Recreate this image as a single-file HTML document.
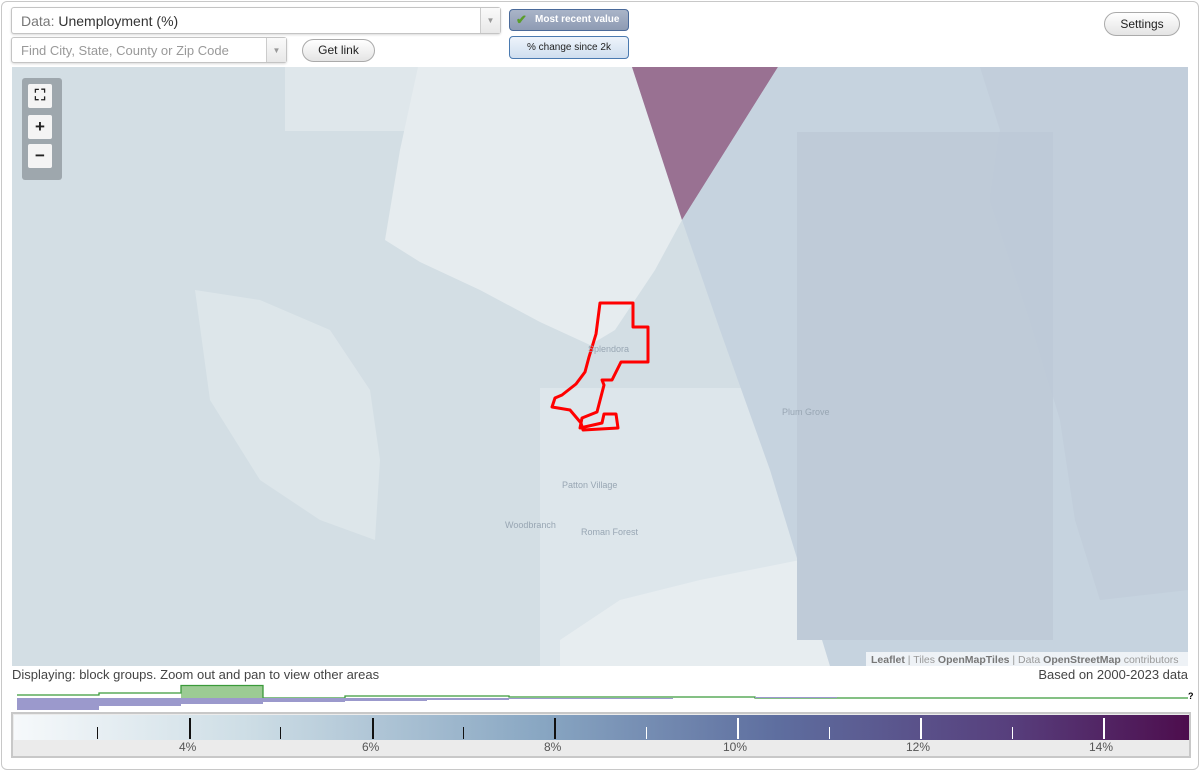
<!DOCTYPE html>
<html><head><meta charset="utf-8"><style>
*{box-sizing:border-box}
body{margin:0;width:1200px;height:771px;background:#fff;font-family:"Liberation Sans",Arial,sans-serif;position:relative;overflow:hidden}
.frame{position:absolute;left:1px;top:1px;width:1198px;height:769px;border:1px solid #c8c8c8;border-radius:6px}
.sel{position:absolute;background:#fff;border:1px solid #c4c4c4;border-radius:3px;box-shadow:0 1px 2px rgba(0,0,0,.15)}
.arrow{position:absolute;right:0;top:0;bottom:0;width:20px;border-left:1px solid #ccc;background:linear-gradient(#fafafa,#e8e8e8);color:#999;font-size:8px;text-align:center}
.btn{position:absolute;border:1px solid #aaa;border-radius:12px;background:linear-gradient(#fff,#e4e4e4);font-size:12px;text-align:center;color:#222}
.zb{position:absolute;left:6px;width:24px;height:24px;background:#f4f4f4;border-radius:2px;text-align:center;font-weight:bold;font-size:17px;line-height:23px;color:#222}
.lab{position:absolute;top:740px;font-size:12px;color:#555}
.tk{position:absolute;width:2px;background:#111}
</style></head><body>
<div class="frame"></div>
<div class="sel" style="left:11px;top:7px;width:490px;height:27px"><span style="position:absolute;left:9px;top:5px;font-size:14px;color:#777">Data: <span style="color:#333">Unemployment (%)</span></span><div class="arrow" style="line-height:26px">▼</div></div>
<div class="sel" style="left:11px;top:37px;width:276px;height:26px"><span style="position:absolute;left:9px;top:5px;font-size:13px;color:#999">Find City, State, County or Zip Code</span><div class="arrow" style="line-height:25px">▼</div></div>
<div class="btn" style="left:302px;top:39px;width:73px;height:23px;line-height:21px">Get link</div>
<div style="position:absolute;left:509px;top:9px;width:120px;height:22px;border:1px solid #4a6a9a;border-radius:4px;background:linear-gradient(#a9b4c8,#8e9bb3);color:#fff;font-size:10px;font-weight:bold;line-height:20px;padding-left:25px">Most recent value<span style="position:absolute;left:6px;top:0;color:#5a9d2a;font-size:13px">✔</span></div>
<div style="position:absolute;left:509px;top:36px;width:120px;height:23px;border:1px solid #4a7ab0;border-radius:4px;background:linear-gradient(#eef4fb,#cfdeef);color:#222;font-size:10px;line-height:21px;text-align:center">% change since 2k</div>
<div class="btn" style="left:1104px;top:12px;width:76px;height:24px;line-height:22px">Settings</div>

<svg style="position:absolute;left:0;top:0" width="1200" height="771" viewBox="0 0 1200 771">
<defs><clipPath id="c"><rect x="12" y="67" width="1176" height="599"/></clipPath>
<linearGradient id="g" x1="0" x2="1"><stop offset="0" stop-color="#f6f9fb"/><stop offset=".2" stop-color="#cddde5"/><stop offset=".45" stop-color="#88a6c2"/><stop offset=".65" stop-color="#5e6e9f"/><stop offset=".85" stop-color="#573e7c"/><stop offset="1" stop-color="#4d0d4d"/></linearGradient></defs>
<g clip-path="url(#c)">
<rect x="12" y="67" width="1176" height="599" fill="#d3dee4"/>
<rect x="285" y="67" width="255" height="64" fill="#dfe7eb"/>
<path d="M195 290 L260 300 L330 330 L370 390 L380 460 L375 540 L320 520 L260 480 L210 400 Z" fill="#dde6ea"/>
<rect x="540" y="388" width="260" height="278" fill="#dde6eb"/>
<path d="M560 640 L620 600 L700 580 L800 560 L830 666 L560 666 Z" fill="#e7edf0"/>
<path d="M418 67 L632 67 L682 220 L655 270 L615 330 L590 345 L540 322 L480 290 L420 262 L385 240 L400 150 Z" fill="#e6ecef"/>
<path d="M632 67 L778 67 L682 220 Z" fill="#997192"/>
<path d="M682 220 L778 67 L1188 67 L1188 666 L830 666 L770 470 L720 330 Z" fill="#c6d3df"/>
<rect x="797" y="132" width="256" height="508" fill="#bfcbd8"/>
<path d="M980 67 L1000 130 L990 200 L1030 320 L1060 420 L1075 520 L1100 600 L1188 590 L1188 67 Z" fill="#bdcad8" opacity=".5"/>
<path d="M600 303 L633 303 L633 327 L648 327 L648 362 L621 362 L612 380 L602 380 L604 385 L597 412 L582 418 L580 428 L602 423 L604 414 L616 414 L618 428 L583 430 L581 423 L570 410 L552 407 L555 398 L562 395 L576 384 L585 372 L589 357 L596 334 Z" fill="none" stroke="#ff0000" stroke-width="3" stroke-linejoin="round"/>
<g font-size="9" fill="#98a6b3"><text x="588" y="352">Splendora</text><text x="782" y="415">Plum Grove</text><text x="562" y="488">Patton Village</text><text x="505" y="528">Woodbranch</text><text x="581" y="535">Roman Forest</text></g>
<rect x="866" y="652" width="322" height="14" fill="#fff" opacity=".7"/>
<text x="871" y="663" font-size="10.5" fill="#999"><tspan fill="#777" font-weight="bold">Leaflet</tspan> | Tiles <tspan fill="#777" font-weight="bold">OpenMapTiles</tspan> | Data <tspan fill="#777" font-weight="bold">OpenStreetMap</tspan> contributors</text>
</g>
<rect x="181" y="686" width="82" height="12" fill="#9ccb94"/>
<path d="M17 695 H99 V693 H181 V685.5 H263 V698 H345 V696 H509 V697 H755 V698 H1188" fill="none" stroke="#3a9a3a" stroke-width="1.3"/>
<path d="M17 698 H263 V702 H345 V701 H427 V700 H509 V699 H591 V699 H673 V698 H755 V697 H837 V698 H17 Z" fill="#9b99cc"/>
<path d="M17 698 V710 H99 V706 H181 V704 H263 V698 Z" fill="#9b99cc"/>
<text x="1188" y="699" font-size="9" font-weight="bold">?</text>
<rect x="12" y="713" width="1178" height="44" fill="#ebebeb" stroke="#c8c8c8" stroke-width="2"/>
<rect x="14" y="715" width="1175" height="25" fill="url(#g)"/>
</svg>
<div style="position:absolute;left:22px;top:78px;width:40px;height:102px;background:#9ea7ad;border-radius:3px">
<div class="zb" style="top:6px;font-size:15px">⛶</div><div class="zb" style="top:37px">+</div><div class="zb" style="top:66px">−</div></div>

<div style="position:absolute;left:12px;top:667px;font-size:13px;color:#444">Displaying: block groups. Zoom out and pan to view other areas</div>
<div style="position:absolute;right:12px;top:667px;font-size:13px;color:#444">Based on 2000-2023 data</div>
<div class="tk" style="left:97px;top:727px;height:12px;width:1px"></div>
<div class="tk" style="left:189px;top:718px;height:21px"></div>
<div class="tk" style="left:280px;top:727px;height:12px;width:1px"></div>
<div class="tk" style="left:372px;top:718px;height:21px"></div>
<div class="tk" style="left:463px;top:727px;height:12px;width:1px"></div>
<div class="tk" style="left:554px;top:718px;height:21px"></div>
<div class="tk" style="left:646px;top:727px;height:12px;width:1px;background:#fff"></div>
<div class="tk" style="left:737px;top:718px;height:21px;background:#fff"></div>
<div class="tk" style="left:829px;top:727px;height:12px;width:1px;background:#fff"></div>
<div class="tk" style="left:920px;top:718px;height:21px;background:#fff"></div>
<div class="tk" style="left:1012px;top:727px;height:12px;width:1px;background:#fff"></div>
<div class="tk" style="left:1103px;top:718px;height:21px;background:#fff"></div>
<div class="lab" style="left:179px">4%</div><div class="lab" style="left:362px">6%</div><div class="lab" style="left:544px">8%</div>
<div class="lab" style="left:723px">10%</div><div class="lab" style="left:906px">12%</div><div class="lab" style="left:1089px">14%</div>
</body></html>
